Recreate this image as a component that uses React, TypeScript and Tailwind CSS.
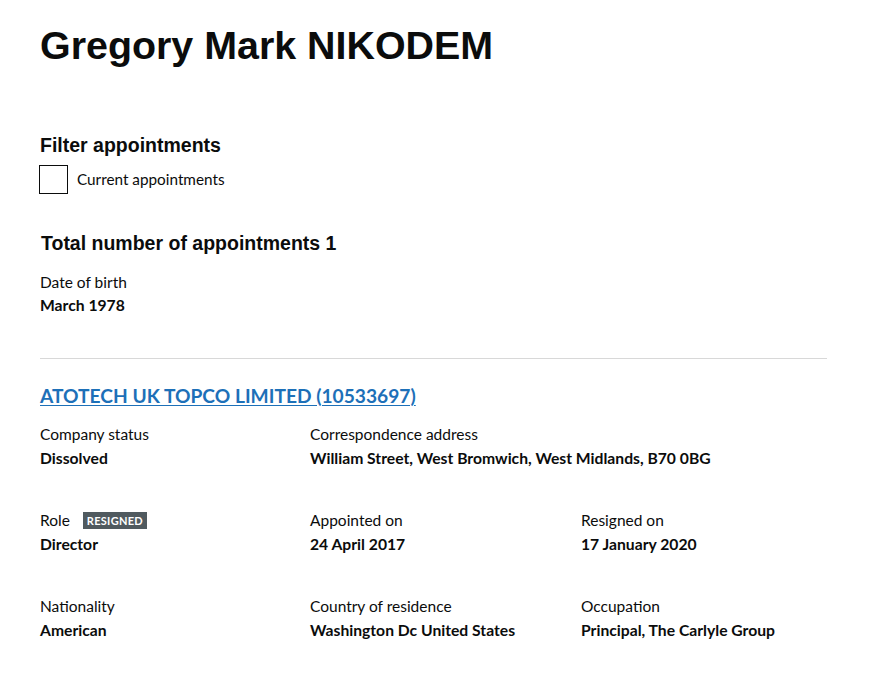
const rows = [
  [
    { label: "Company status", value: "Dissolved" },
    { label: "Correspondence address", value: "William Street, West Bromwich, West Midlands, B70 0BG", wide: true },
  ],
  [
    { label: "Role", value: "Director", badge: "Resigned" },
    { label: "Appointed on", value: "24 April 2017" },
    { label: "Resigned on", value: "17 January 2020" },
  ],
  [
    { label: "Nationality", value: "American" },
    { label: "Country of residence", value: "Washington Dc United States" },
    { label: "Occupation", value: "Principal, The Carlyle Group" },
  ],
];

export default function App() {
  return (
    <div className="min-h-[678px] bg-white text-[#0b0c0c] px-10 font-['Lato',sans-serif]">
      <h1 className="pt-[22px] text-[39.4px] leading-[1.2] font-bold font-['Liberation_Sans',Arial,sans-serif]">
        Gregory Mark NIKODEM
      </h1>

      <h2 className="mt-[64px] text-[19.5px] leading-6 font-bold font-['Liberation_Sans',Arial,sans-serif]">
        Filter appointments
      </h2>
      <label className="mt-2 -ml-px flex items-center gap-[9px] text-[15.3px]">
        <span className="w-[29px] h-[29px] border border-[#0b0c0c] bg-white" />
        Current appointments
      </label>

      <h2 className="mt-[37px] ml-px text-[19.5px] leading-6 font-bold font-['Liberation_Sans',Arial,sans-serif]">
        Total number of appointments 1
      </h2>
      <div className="mt-[17px] text-[15.5px] leading-[20px]">Date of birth</div>
      <div className="mt-[3px] text-[15.7px] leading-[20px] font-bold">March 1978</div>

      <hr className="mt-[43px] mr-2 border-0 border-t border-[#d8d8d8]" />

      <a href="#" className="mt-[25px] block w-fit text-[19.2px] leading-6 font-bold text-[#1d70b8] underline underline-offset-2">
        ATOTECH UK TOPCO LIMITED (10533697)
      </a>

      <div className="mt-[16px] flex flex-col gap-[42px]">
        {rows.map((row, i) => (
          <div key={i} className="grid grid-cols-[270px_271px_1fr]">
            {row.map((item) => (
              <div key={item.label} className={item.wide ? "col-span-2" : ""}>
                <div className="flex items-center gap-[13px] text-[15.5px] leading-[20px]">
                  {item.label}
                  {item.badge && (
                    <span className="bg-[#505a5f] text-white text-[11px] font-bold uppercase tracking-wide px-[4px] leading-[17px]">
                      {item.badge}
                    </span>
                  )}
                </div>
                <div className="mt-[4px] text-[15.7px] leading-[20px] font-bold">{item.value}</div>
              </div>
            ))}
          </div>
        ))}
      </div>
    </div>
  );
}
